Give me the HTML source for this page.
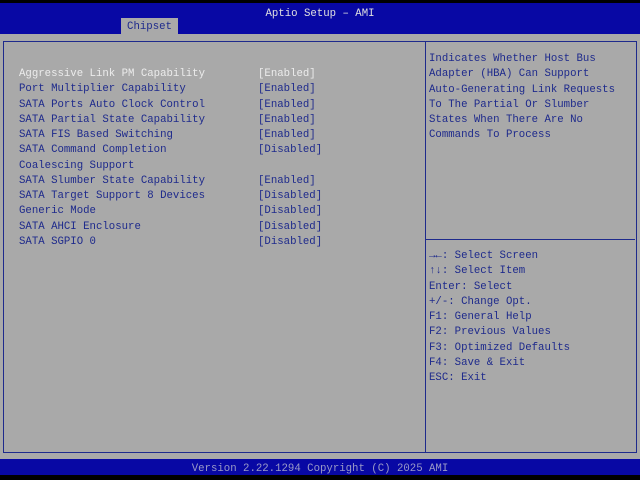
<!DOCTYPE html>
<html><head><style>
*{margin:0;padding:0}
body{width:640px;height:480px;background:#000;position:relative;overflow:hidden;font-family:"Liberation Mono","DejaVu Sans Mono",monospace;font-size:10.7px;color:#1e2a8c}
.hdr{position:absolute;left:0;top:3px;width:640px;height:31px;background:#0808a4}
.title{position:absolute;top:7px;left:0;width:640px;text-align:center;color:#e0e0e0;line-height:15px}
.tab{position:absolute;left:121px;top:18px;width:57px;height:16px;background:#a9a9a9;color:#1e2a8c;text-align:center;line-height:19px}
.body{position:absolute;left:0;top:34px;width:640px;height:425px;background:#a9a9a9}
.box{position:absolute;left:3px;top:41px;width:632px;height:410px;border:1px solid #1e2a8c}
.div{position:absolute;left:425px;top:41px;width:1px;height:411px;background:#1e2a8c}
.hl{position:absolute;left:426px;top:239px;width:209px;height:1px;background:#1e2a8c}
.list{position:absolute;left:19px;top:67px;line-height:15.27px;white-space:pre}
.vals{position:absolute;left:258px;top:67px;line-height:15.27px;white-space:pre}
.help{position:absolute;left:429px;top:52px;line-height:15.27px;white-space:pre}
.keys{position:absolute;left:429px;top:249px;line-height:15.27px;white-space:pre}
.sel{color:#ececec}
.ftr{position:absolute;left:0;top:459px;width:640px;height:16px;background:#0808a4;color:#9a9ac8;text-align:center;line-height:20px}
</style></head><body>
<div class="hdr"></div>
<div class="title">Aptio Setup – AMI</div>
<div class="tab">Chipset</div>
<div class="body"></div>
<div class="box"></div>
<div class="div"></div>
<div class="hl"></div>
<div class="list"><span class="sel">Aggressive Link PM Capability</span>
Port Multiplier Capability
SATA Ports Auto Clock Control
SATA Partial State Capability
SATA FIS Based Switching
SATA Command Completion
Coalescing Support
SATA Slumber State Capability
SATA Target Support 8 Devices
Generic Mode
SATA AHCI Enclosure
SATA SGPIO 0</div>
<div class="vals"><span class="sel">[Enabled]</span>
[Enabled]
[Enabled]
[Enabled]
[Enabled]
[Disabled]

[Enabled]
[Disabled]
[Disabled]
[Disabled]
[Disabled]</div>
<div class="help">Indicates Whether Host Bus
Adapter (HBA) Can Support
Auto-Generating Link Requests
To The Partial Or Slumber
States When There Are No
Commands To Process</div>
<div class="keys">→←: Select Screen
↑↓: Select Item
Enter: Select
+/-: Change Opt.
F1: General Help
F2: Previous Values
F3: Optimized Defaults
F4: Save &amp; Exit
ESC: Exit</div>
<div class="ftr">Version 2.22.1294 Copyright (C) 2025 AMI</div>
</body></html>
